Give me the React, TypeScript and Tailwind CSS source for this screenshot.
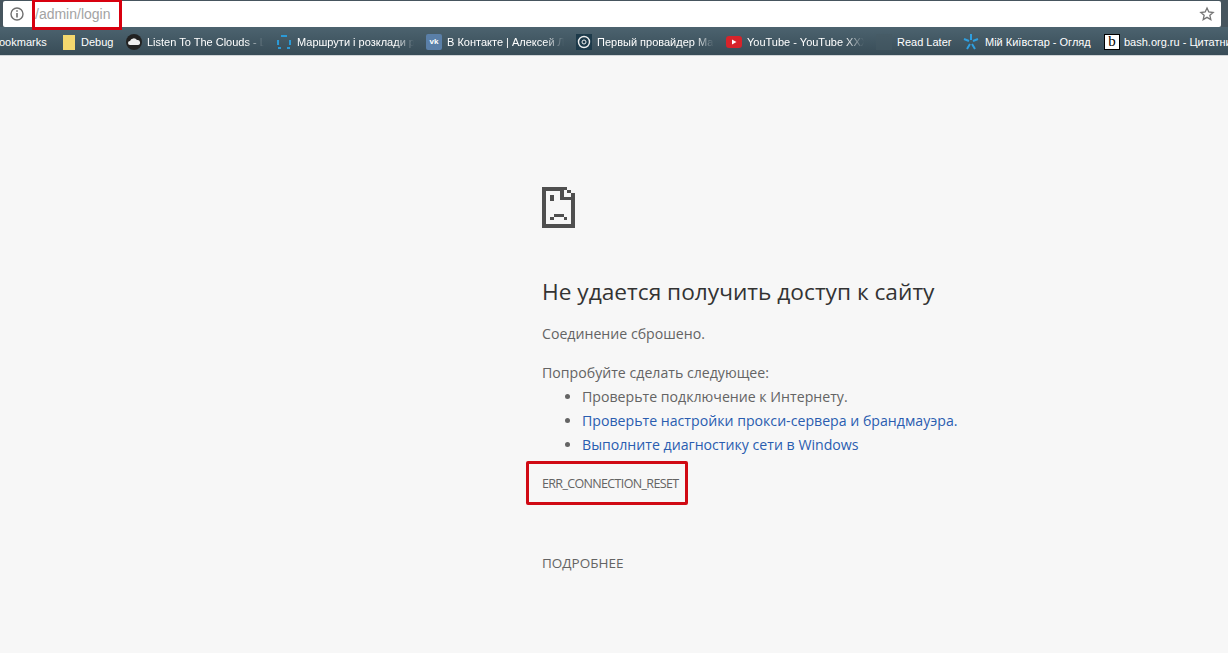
import React from "react";

const Sad = () => (
  <svg width="33" height="41" viewBox="0 0 33 41" shapeRendering="crispEdges" fill="#4f4f4f" className="block">
    <path d="M0 0h22v4H4v33h25V13h4v28H0z" />
    <path d="M18 0h4v10h11v3H18zM22 0h3v3h-3zM25 3h4v3h-4zM29 6h4v4h-4z" />
    <path d="M8 8h4v6H8zM12 27h10v3H12zM8 30h4v3H8zM22 30h3v3h-3z" />
  </svg>
);

const Bm = ({ icon, text, w, gap = 5, fade = false }: { icon: React.ReactNode; text: string; w: number; gap?: number; fade?: boolean }) => (
  <div className="flex items-center shrink-0 overflow-hidden" style={{ width: w, gap }}>
    <span className="shrink-0 w-4 h-4 flex items-center justify-center">{icon}</span>
    {fade ? (
      <span className="whitespace-nowrap w-[117px] overflow-hidden [mask-image:linear-gradient(to_right,black_84%,transparent)]">{text}</span>
    ) : (
      <span className="whitespace-nowrap">{text}</span>
    )}
  </div>
);

export default function App() {
  return (
    <div className="relative w-[1228px] h-[653px] overflow-hidden bg-[#f7f7f7] font-['Open_Sans','Noto_Sans',sans-serif]">
      <div className="h-[27px] bg-[#46555e] pl-[3px] pr-[7px] pt-px">
        <div className="h-[26px] bg-white rounded-[2px] flex items-center pl-[7px] pr-[6px]">
          <svg width="14" height="14" viewBox="0 0 14 14" fill="none" stroke="#6f6f6f" strokeWidth="1.4" className="shrink-0">
            <circle cx="7" cy="7" r="6" />
            <path d="M7 6v4.500M7 3.200v1.600" strokeWidth="1.600" />
          </svg>
          <span className="ml-[11px] text-[14px] text-[#a3a3a3] font-['Liberation_Sans',sans-serif]">/admin/login</span>
          <svg width="16" height="16" viewBox="0 0 24 24" fill="none" stroke="#757575" strokeWidth="2" className="ml-auto">
            <path d="M12 3l2.700 6 6.500.7-4.900 4.300 1.400 6.400L12 17l-5.700 3.400 1.400-6.400-4.900-4.300 6.500-.7z" />
          </svg>
        </div>
      </div>
      <div className="h-[29px] pt-[2px] bg-gradient-to-b from-[#4c636f] to-[#384c57] border-b border-[#cfd3d6] flex items-center pl-[61px] text-[11px] text-white font-['Liberation_Sans',sans-serif] relative">
        <span className="absolute left-[-1px] whitespace-nowrap">ookmarks</span>
        <Bm w={65} gap={4} text="Debug" icon={<span className="block w-[12px] h-[15px] bg-[#f5d76e]" />} />
        <Bm w={150} fade text="Listen To The Clouds - L" icon={
          <svg width="16" height="16" viewBox="0 0 16 16"><circle cx="8" cy="8" r="8" fill="#222" /><path d="M4 11a2 2 0 010-4 4 4 0 017-1 2.500 2.500 0 011 5z" fill="#eee" /></svg>
        } />
        <Bm w={150} fade text="Маршрути і розклади р" icon={
          <svg width="16" height="16" viewBox="0 0 16 16" fill="none" stroke="#2b9ad6" strokeWidth="2"><path d="M5 2h6M2 6v5M14 6v5M2 14h3M11 14h3" /></svg>
        } />
        <Bm w={150} fade text="В Контакте | Алексей Л" icon={
          <span className="w-4 h-4 rounded-[2px] bg-[#5a7fa8] text-white text-[8px] font-bold flex items-center justify-center">vk</span>
        } />
        <Bm w={150} fade text="Первый провайдер Ма" icon={
          <svg width="16" height="16" viewBox="0 0 16 16" fill="none"><rect width="16" height="16" fill="#1d3a4a" /><circle cx="8" cy="8" r="5.500" stroke="#eee" strokeWidth="1.400" /><circle cx="8" cy="8" r="2" stroke="#eee" /></svg>
        } />
        <Bm w={150} fade text="YouTube - YouTube XXX" icon={
          <svg width="16" height="12" viewBox="0 0 16 12"><rect width="16" height="12" rx="3" fill="#d8232a" /><path d="M6 3.500l4.500 2.500L6 8.500z" fill="#fff" /></svg>
        } />
        <Bm w={87} text="Read Later" icon={<span className="block w-4 h-4 bg-[#46596380]" />} />
        <Bm w={141} gap={6} text="Мій Київстар - Огляд" icon={
          <svg width="16" height="16" viewBox="0 0 16 16" stroke="#2f9fe0" strokeWidth="2"><path d="M8 0v6M1 5l5 2M15 5l-5 2M4 15l3-5M12 15l-3-5" /></svg>
        } />
        <Bm w={130} gap={4} text="bash.org.ru - Цитатник" icon={
          <span className="w-4 h-4 bg-white border border-black text-black text-[15px] leading-[13px] font-normal text-center font-['Liberation_Serif',serif]">b</span>
        } />
      </div>

      <main className="pl-[542px] pt-[131px] text-[#646464]">
        <Sad />
        <h1 className="mt-[48px] text-[22.700px] leading-[32px] text-[#333333] font-normal">Не удается получить доступ к сайту</h1>
        <p className="mt-[16px] text-[14.150px] leading-[20px]">Соединение сброшено.</p>
        <p className="mt-[19px] text-[14.150px] leading-[20px]">Попробуйте сделать следующее:</p>
        <ul className="mt-[2px] pl-[40px] list-disc text-[14.150px] leading-[24px]">
          <li>Проверьте подключение к Интернету.</li>
          <li><span className="text-[#2a5db0]">Проверьте настройки прокси-сервера и брандмауэра.</span></li>
          <li><span className="text-[#2a5db0]">Выполните диагностику сети в Windows</span></li>
        </ul>
        <p className="mt-[19px] text-[12.500px] tracking-[-0.65px] leading-[16px]">ERR_CONNECTION_RESET</p>
        <p className="mt-[62px] text-[13.500px] leading-[18px]">ПОДРОБНЕЕ</p>
      </main>

      <div className="absolute left-[32px] top-0 w-[90px] h-[30px] border-[3px] border-[#d8000f] border-t-[2px]" />
      <div className="absolute left-[526px] top-[461px] w-[162px] h-[44px] border-[3px] border-[#d00a14] rounded-[2px]" />
    </div>
  );
}
